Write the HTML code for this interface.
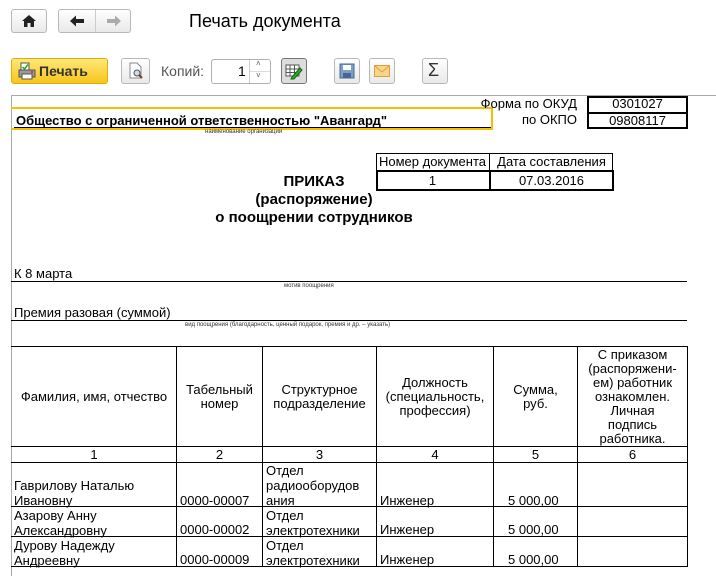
<!DOCTYPE html>
<html><head><meta charset="utf-8"><style>
*{margin:0;padding:0;box-sizing:border-box}
body{width:716px;height:576px;overflow:hidden;background:#fff;font-family:"Liberation Sans","DejaVu Sans",sans-serif;color:#000;position:relative}
.a{position:absolute}
.btn{position:absolute;border:1px solid #b8b8b8;border-radius:3px;background:linear-gradient(#fff,#e9e9e9)}
.t{position:absolute;font-size:13px;white-space:nowrap}
.s{position:absolute;font-size:6px;white-space:nowrap;color:#333}
.hl{position:absolute;height:1px;background:#000}
.vl{position:absolute;width:1px;background:#000}
.c{text-align:center;position:absolute;font-size:13px;line-height:14px}
</style></head><body>
<div class="btn" style="left:11px;top:9px;width:36px;height:24px"></div>
<svg class="a" style="left:21px;top:14px" width="16" height="14"><path d="M8 1 L1 7 H3 V13 H6.5 V9 H9.5 V13 H13 V7 H15 Z" fill="#222"/></svg>
<div class="btn" style="left:58px;top:9px;width:73px;height:24px"></div>
<div class="a" style="left:95px;top:10px;width:1px;height:22px;background:#ccc"></div>
<svg class="a" style="left:68px;top:14px" width="18" height="14"><path d="M2 7 L8 1.5 V5 H16 V9 H8 V12.5 Z" fill="#222"/></svg>
<svg class="a" style="left:105px;top:14px" width="18" height="14"><path d="M16 7 L10 1.5 V5 H2 V9 H10 V12.5 Z" fill="#aaa"/></svg>
<div class="t" style="left:189px;top:11px;font-size:18px">Печать документа</div>

<div class="a" style="left:11px;top:58px;width:97px;height:26px;border:1px solid #e0b000;border-radius:3px;background:linear-gradient(#ffe77a,#f7c61c)"></div>
<svg class="a" style="left:18px;top:62px" width="18" height="18"><rect x="3" y="1" width="8" height="8" fill="#fff" stroke="#555"/><path d="M4.5 5 L6.5 7 L10 2.5" stroke="#2a2" stroke-width="1.5" fill="none"/><rect x="1" y="8" width="16" height="7" fill="#999" stroke="#555"/><rect x="4" y="12" width="10" height="5" fill="#fff" stroke="#555"/><circle cx="14" cy="10" r="1" fill="#d22"/></svg>
<div class="t" style="left:39px;top:63px;font-size:14px;font-weight:bold;color:#333">Печать</div>
<div class="btn" style="left:121px;top:58px;width:29px;height:26px"></div>
<svg class="a" style="left:127px;top:62px" width="18" height="18"><path d="M3 1 H10 L14 5 V16 H3 Z" fill="#fff" stroke="#888"/><circle cx="10" cy="11" r="3" fill="#cde" stroke="#456"/><path d="M12 13 L15 16" stroke="#742" stroke-width="2"/></svg>
<div class="t" style="left:161px;top:63px;font-size:14px;color:#555">Копий:</div>
<div class="a" style="left:211px;top:59px;width:60px;height:25px;border:1px solid #b0b0b0;border-radius:3px;background:#fff"></div>
<div class="a" style="left:249px;top:60px;width:1px;height:23px;background:#ccc"></div>
<div class="a" style="left:250px;top:71px;width:20px;height:1px;background:#ddd"></div>
<div class="t" style="left:238px;top:63px;font-size:14px">1</div>
<div class="t" style="left:256px;top:59px;font-size:8px;color:#555">˄</div>
<div class="t" style="left:256px;top:71px;font-size:8px;color:#555">˅</div>
<div class="a" style="left:281px;top:58px;width:26px;height:26px;border:1px solid #777;border-radius:3px;background:#ddd"></div>
<svg class="a" style="left:285px;top:62px" width="18" height="18"><rect x="1" y="3" width="13" height="11" fill="#fff" stroke="#555"/><path d="M1 7H14M1 10.5H14M5 3V14M9.5 3V14" stroke="#555"/><path d="M7 15 L15 6 L17 8 L9 17 L6 17 Z" fill="#3a3" stroke="#161"/></svg>
<div class="btn" style="left:334px;top:58px;width:26px;height:26px"></div>
<svg class="a" style="left:339px;top:63px" width="16" height="16"><rect x="1" y="1" width="14" height="14" fill="#7da0c8" stroke="#46688e"/><rect x="4" y="2" width="8" height="5" fill="#fff"/><rect x="4" y="10" width="8" height="5" fill="#46688e"/></svg>
<div class="btn" style="left:369px;top:58px;width:26px;height:26px"></div>
<svg class="a" style="left:374px;top:65px" width="16" height="12"><rect x="0.5" y="0.5" width="15" height="11" fill="#f8d58a" stroke="#d9a040"/><path d="M1 1 L8 7 L15 1" stroke="#d9a040" fill="none"/></svg>
<div class="btn" style="left:422px;top:58px;width:26px;height:26px"></div>
<div class="t" style="left:428px;top:60px;font-size:18px;color:#333">Σ</div>

<div class="a" style="left:11px;top:95px;width:705px;height:1px;background:#aaa"></div>
<div class="a" style="left:11px;top:95px;width:1px;height:481px;background:#aaa"></div>

<div class="a" style="left:11px;top:107px;width:482px;height:23px;border:2px solid #f5c000;border-left:none"></div>
<div class="t" style="left:16px;top:113px;font-weight:bold">Общество с ограниченной ответственностью "Авангард"</div>
<div class="hl" style="left:14px;top:127px;width:477px"></div>
<div class="s" style="left:205px;top:129px">наименование организации</div>
<div class="t" style="left:470px;top:96px;width:107px;text-align:right">Форма по ОКУД</div>
<div class="t" style="left:470px;top:112px;width:107px;text-align:right">по ОКПО</div>
<div class="a" style="left:587px;top:96px;width:101px;height:33px;border:2px solid #000"></div>
<div class="hl" style="left:588px;top:112px;width:99px;height:2px"></div>
<div class="c" style="left:588px;top:97px;width:99px">0301027</div>
<div class="c" style="left:588px;top:114px;width:99px">09808117</div>

<div class="a" style="left:376px;top:153px;width:237px;height:18px;border:1px solid #000;border-bottom:none"></div>
<div class="vl" style="left:489px;top:153px;height:38px"></div>
<div class="a" style="left:376px;top:170px;width:238px;height:21px;border:2px solid #000"></div>
<div class="vl" style="left:489px;top:170px;height:21px;width:2px"></div>
<div class="c" style="left:376px;top:155px;width:113px">Номер документа</div>
<div class="c" style="left:490px;top:155px;width:123px">Дата составления</div>
<div class="c" style="left:376px;top:174px;width:113px">1</div>
<div class="c" style="left:490px;top:174px;width:123px">07.03.2016</div>

<div class="c" style="left:214px;top:173px;width:200px;font-weight:bold;font-size:15px;line-height:18px">ПРИКАЗ<br>(распоряжение)<br>о поощрении сотрудников</div>

<div class="t" style="left:14px;top:266px">К 8 марта</div>
<div class="hl" style="left:11px;top:281px;width:676px"></div>
<div class="s" style="left:284px;top:283px">мотив поощрения</div>
<div class="t" style="left:14px;top:305px">Премия разовая (суммой)</div>
<div class="hl" style="left:11px;top:320px;width:676px"></div>
<div class="s" style="left:185px;top:322px">вид поощрения (благодарность, ценный подарок, премия и др. – указать)</div>

<div class="hl" style="left:11px;top:346px;width:677px"></div>
<div class="hl" style="left:11px;top:446px;width:677px"></div>
<div class="hl" style="left:11px;top:462px;width:677px"></div>
<div class="hl" style="left:11px;top:506px;width:677px"></div>
<div class="hl" style="left:11px;top:536px;width:677px"></div>
<div class="hl" style="left:11px;top:566px;width:677px"></div>
<div class="vl" style="left:176px;top:346px;height:221px"></div>
<div class="vl" style="left:262px;top:346px;height:221px"></div>
<div class="vl" style="left:376px;top:346px;height:221px"></div>
<div class="vl" style="left:493px;top:346px;height:221px"></div>
<div class="vl" style="left:577px;top:346px;height:221px"></div>
<div class="vl" style="left:687px;top:346px;height:221px"></div>

<div class="c" style="left:12px;top:390px;width:164px">Фамилия, имя, отчество</div>
<div class="c" style="left:177px;top:383px;width:85px">Табельный<br>номер</div>
<div class="c" style="left:263px;top:383px;width:113px">Структурное<br>подразделение</div>
<div class="c" style="left:377px;top:376px;width:116px">Должность<br>(специальность,<br>профессия)</div>
<div class="c" style="left:494px;top:383px;width:83px">Сумма,<br>руб.</div>
<div class="c" style="left:578px;top:348px;width:109px">С приказом<br>(распоряжени-<br>ем) работник<br>ознакомлен.<br>Личная<br>подпись<br>работника.</div>
<div class="c" style="left:12px;top:448px;width:164px">1</div>
<div class="c" style="left:177px;top:448px;width:85px">2</div>
<div class="c" style="left:263px;top:448px;width:113px">3</div>
<div class="c" style="left:377px;top:448px;width:116px">4</div>
<div class="c" style="left:494px;top:448px;width:83px">5</div>
<div class="c" style="left:578px;top:448px;width:109px">6</div>

<div class="t" style="left:14px;top:478px;line-height:15px">Гаврилову Наталью<br>Ивановну</div>
<div class="t" style="left:180px;top:493px">0000-00007</div>
<div class="t" style="left:266px;top:463px;line-height:15px">Отдел<br>радиооборудов<br>ания</div>
<div class="t" style="left:380px;top:493px">Инженер</div>
<div class="t" style="left:508px;top:493px">5 000,00</div>

<div class="t" style="left:14px;top:508px;line-height:15px">Азарову Анну<br>Александровну</div>
<div class="t" style="left:180px;top:522px">0000-00002</div>
<div class="t" style="left:266px;top:508px;line-height:15px">Отдел<br>электротехники</div>
<div class="t" style="left:380px;top:522px">Инженер</div>
<div class="t" style="left:508px;top:522px">5 000,00</div>

<div class="t" style="left:14px;top:538px;line-height:15px">Дурову Надежду<br>Андреевну</div>
<div class="t" style="left:180px;top:552px">0000-00009</div>
<div class="t" style="left:266px;top:538px;line-height:15px">Отдел<br>электротехники</div>
<div class="t" style="left:380px;top:552px">Инженер</div>
<div class="t" style="left:508px;top:552px">5 000,00</div>
</body></html>
